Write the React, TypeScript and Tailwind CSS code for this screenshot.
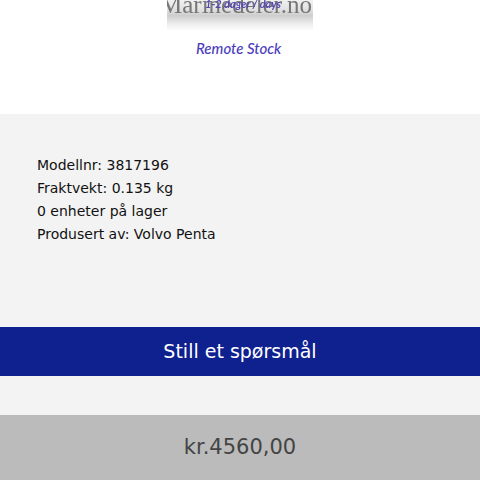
import React from 'react';

const details = [
  'Modellnr: 3817196',
  'Fraktvekt: 0.135 kg',
  '0 enheter på lager',
  'Produsert av: Volvo Penta',
];

const StockImage: React.FC = () => (
  <svg width="146" height="64" viewBox="0 0 146 64" role="img" aria-label="Remote Stock">
    <defs>
      <linearGradient id="shade" x1="0" y1="0" x2="0" y2="1">
        <stop offset="0" stopColor="#f1f1f1" />
        <stop offset="0.3" stopColor="#e2e2e2" />
        <stop offset="0.5" stopColor="#cecece" />
        <stop offset="0.75" stopColor="#ebebeb" />
        <stop offset="1" stopColor="#ffffff" />
      </linearGradient>
      <filter id="soft" x="-5%" y="-20%" width="110%" height="140%">
        <feGaussianBlur stdDeviation="0.6" />
      </filter>
    </defs>
    <rect width="146" height="31" fill="url(#shade)" />
    <g filter="url(#soft)">
      <text x="-7" y="13" fontSize="25" fill="#777777" fontFamily="Liberation Serif, serif">Marinedeler.no</text>
      <text x="38" y="8" fontSize="11" fontWeight="700" fontStyle="italic" fill="#5548b0" fontFamily="Lato, sans-serif">1-2 dager / days</text>
    </g>
    <text x="29" y="54" fontSize="15" fontWeight="500" fontStyle="italic" fill="#4a3cc0" fontFamily="Lato, cursive">Remote Stock</text>
  </svg>
);

export default function App() {
  return (
    <main className="min-h-screen bg-[#f3f3f3] font-['DejaVu_Sans',sans-serif]">
      {/* Product image */}
      <div className="flex justify-center bg-white pb-[50px]">
        <StockImage />
      </div>

      {/* Product details */}
      <ul className="px-[37px] pt-10 pb-[81px] text-sm leading-[23px] text-[#111111]">
        {details.map((line) => (
          <li key={line}>{line}</li>
        ))}
      </ul>

      <button className="block w-full bg-[#0f218f] py-3 text-[19px] leading-[25px] text-white">
        Still et spørsmål
      </button>

      {/* Price */}
      <div className="mt-[39px] bg-[#bbbbbb] py-4 text-center text-[21px] leading-[33px] text-[#444444]">
        kr.4560,00
      </div>
    </main>
  );
}
